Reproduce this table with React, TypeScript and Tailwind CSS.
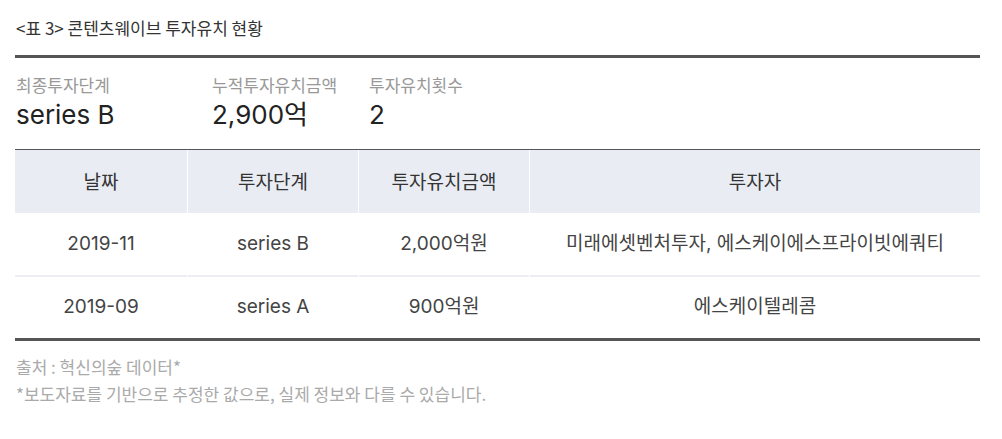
const font = { fontFamily: '"Noto Sans CJK KR", "Noto Sans", sans-serif' };
const latin = { fontFamily: 'Inter, "Noto Sans CJK KR", sans-serif' };

const stats = [
  { label: "최종투자단계", value: "series B", w: "w-[196px]" },
  { label: "누적투자유치금액", value: "2,900억", w: "w-[157px]" },
  { label: "투자유치횟수", value: "2", w: "w-[150px]" },
];

const rows = [
  { date: "2019-11", stage: "series B", amount: "2,000억원", investors: "미래에셋벤처투자, 에스케이에스프라이빗에쿼티" },
  { date: "2019-09", stage: "series A", amount: "900억원", investors: "에스케이텔레콤" },
];

const cols = "grid grid-cols-[172px_170px_170px_1fr] gap-x-[1px]";

export default function App() {
  return (
    <div className="w-[1002px] h-[439px] bg-white pl-[15px] pr-[22px] pt-[15px]" style={font}>
      <div className="text-[17px] leading-[26px] text-[#333] pl-[1px]">&lt;표 3&gt; 콘텐츠웨이브 투자유치 현황</div>

      <div className="mt-[14px] border-t-[3px] border-[#555]" />

      <div className="flex pt-[15px] pb-[17px] pl-[1px]">
        {stats.map((s) => (
          <div key={s.label} className={s.w}>
            <div className="text-[17px] leading-[24px] text-[#999]">{s.label}</div>
            <div className="text-[26px] leading-[35px] text-[#222]" style={latin}>{s.value}</div>
          </div>
        ))}
      </div>

      <div className="border-t border-[#555]">
        <div className={cols + " text-[19px] text-[#333] h-[63px]"}>
          {["날짜", "투자단계", "투자유치금액", "투자자"].map((h) => (
            <div key={h} className="flex items-center justify-center bg-[#e9edf3]">{h}</div>
          ))}
        </div>
        {rows.map((r, idx) => (
          <div
            key={r.date}
            className={cols + " text-[19px] text-[#444] " + (idx === 0 ? "h-[64px]" : "h-[61px]")}
            style={latin}
          >
            {[r.date, r.stage, r.amount, r.investors].map((c, i) => (
              <div
                key={i}
                className={"flex items-center justify-center " + (idx === 0 ? "border-b-2 border-[#eceef3]" : "")}
              >
                {c}
              </div>
            ))}
          </div>
        ))}
        <div className="border-t-[3px] border-[#555]" />
      </div>

      <div className="pt-[12px] text-[17px] leading-[27px] text-[#aaa] pl-[1px]">
        <div>출처 : 혁신의숲 데이터*</div>
        <div>*보도자료를 기반으로 추정한 값으로, 실제 정보와 다를 수 있습니다.</div>
      </div>
    </div>
  );
}
